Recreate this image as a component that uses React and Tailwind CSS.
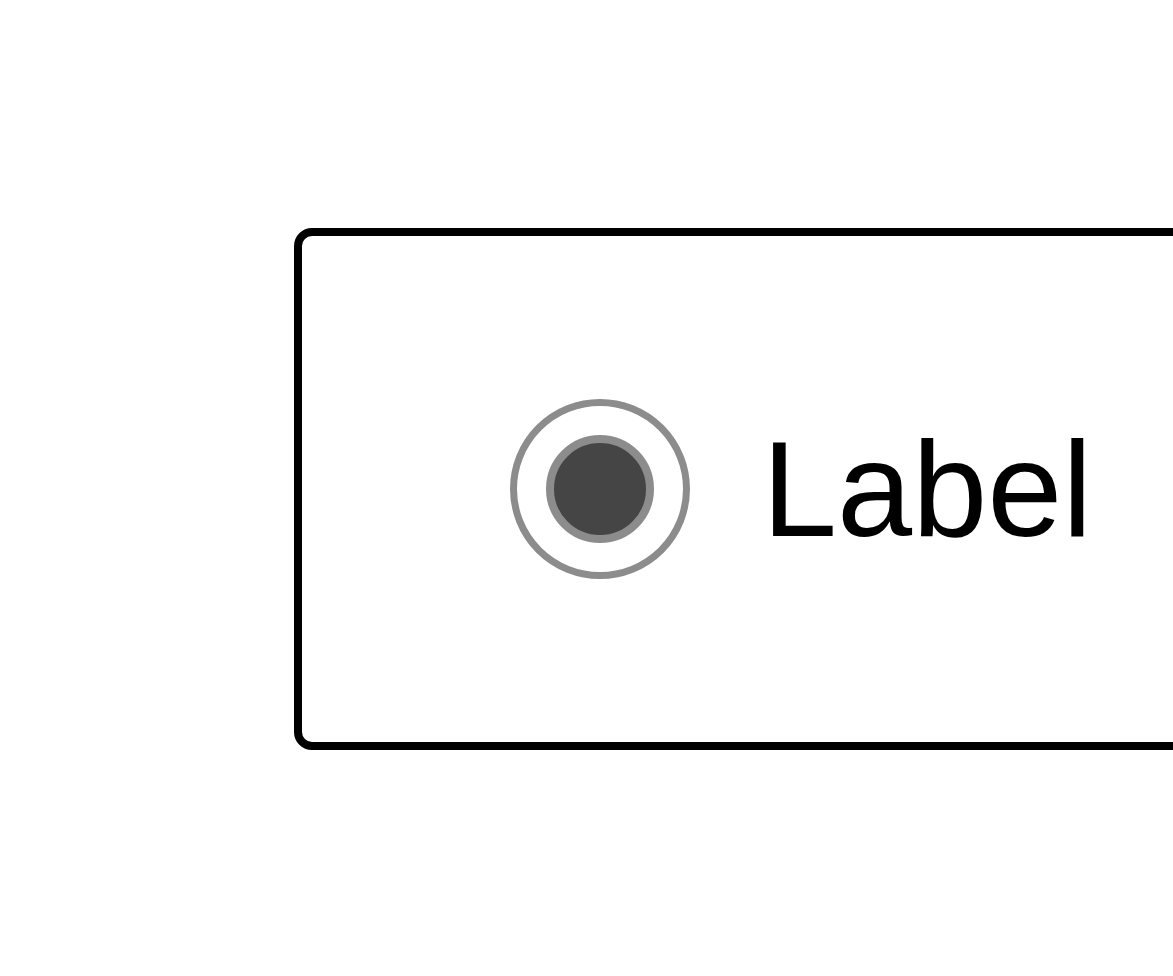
import React from 'react';

const RadioOption = ({ label }) => {
  return (
    <div className="w-[1000px] h-[522px] shrink-0 border-8 border-black rounded-[18px] bg-white flex items-center pl-[208px] gap-[72px]">
      {/* radio */}
      <div className="w-[180px] h-[180px] rounded-full border-[7px] border-[#8c8c8c] flex items-center justify-center">
        <div className="w-[108px] h-[108px] rounded-full border-8 border-[#8c8c8c] bg-[#454545]" />
      </div>
      <span className="text-[135px] leading-none text-black font-['Liberation_Sans',Arial,sans-serif]">{label}</span>
    </div>
  );
};

const App = () => {
  return (
    <div className="w-[1173px] h-[976px] overflow-hidden bg-white pt-[228px] pl-[294px] flex items-start">
      <RadioOption label="Label" />
    </div>
  );
};

export default App;
